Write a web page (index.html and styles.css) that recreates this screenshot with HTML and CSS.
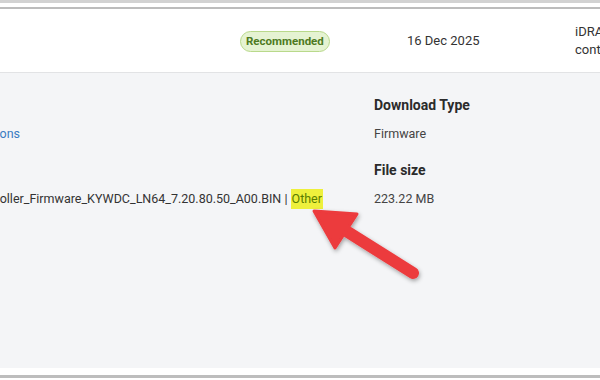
FILE: index.html
```html
<!DOCTYPE html>
<html lang="en">
    <head>
        <meta charset="UTF-8" />
        <meta name="viewport" content="width=device-width, initial-scale=1.0" />
        <title>Driver Details</title>
        <link rel="stylesheet" href="styles.css">
    </head>
    <body>
        <div class="frame">
            <div class="driverTable">
                <!-- Summary row -->
                <div class="driverRow">
                    <div class="cellBadge">
                        <span class="badge">Recommended</span>
                    </div>
                    <div class="cellDate">16 Dec 2025</div>
                    <div class="cellDesc">iDRAC with Lifecycle<br />controller</div>
                </div>

                <!-- Expanded details -->
                <div class="driverDetails">
                    <div class="detailsGrid">
                        <div></div>
                        <div class="detailKey">Download Type</div>
                        <div class="clipLine">
                            <a class="detailLink" href="#">Other versions</a>
                        </div>
                        <div class="detailValue">Firmware</div>
                        <div></div>
                        <div class="detailKey">File size</div>
                        <div class="clipLine wide">
                            <span class="fileName">iDRAC-with-Lifecycle-Controller_Firmware_KYWDC_LN64_7.20.80.50_A00.BIN | <mark class="fileTag">Other</mark></span>
                        </div>
                        <div class="detailValue">223.22 MB</div>
                    </div>
                </div>
                <div class="tableFoot"></div>
            </div>
        </div>

        <!-- Annotation arrow -->
        <svg class="annotation" width="600" height="380" viewBox="0 0 600 380">
            <defs>
                <filter id="arrowShadow" x="-20%" y="-20%" width="140%" height="140%">
                    <feDropShadow dx="1" dy="2" stdDeviation="2" flood-color="#000" flood-opacity="0.35" />
                </filter>
            </defs>
            <g filter="url(#arrowShadow)" fill="#ec3a3d" stroke="#ec3a3d">
                <line x1="343" y1="229" x2="413" y2="273" stroke-width="12" stroke-linecap="round" />
                <polygon points="314,211 357,214 335,248" stroke-width="3" stroke-linejoin="round" />
            </g>
        </svg>
    </body>
</html>
```

FILE: styles.css
```css
body {
    margin: 0;
    background: #ffffff;
    font-family: Roboto, 'Liberation Sans', sans-serif;
    color: #333333;
}

/* Outer frame */
.frame {
    border-top: 3px solid #d2d2d2;
    border-bottom: 3px solid #bdbdbd;
    padding-top: 4px;
    height: 368px;
    overflow: hidden;
}
.driverTable {
    border-top: 2px solid #bcbcbc;
}

/* Summary row */
.driverRow {
    display: flex;
    align-items: center;
    height: 63px;
    border-bottom: 1px solid #e2e3e5;
}
.driverRow > div {
    flex: none;
}
.cellBadge {
    width: 167px;
    padding-left: 240px;
}
.badge {
    display: inline-block;
    height: 19px;
    line-height: 19px;
    padding: 0 5px;
    border: 1px solid #b9d98b;
    border-radius: 11px;
    background: #e5f3d2;
    color: #4e7a22;
    font-size: 11.5px;
    font-weight: bold;
}
.cellDate {
    width: 168px;
    font-size: 13px;
    color: #333333;
}
.cellDesc {
    font-size: 13px;
    line-height: 18px;
    color: #333333;
    white-space: nowrap;
}

/* Expanded details */
.driverDetails {
    background: #f4f5f7;
    height: 273px;
    padding-top: 22px;
}
.detailsGrid {
    display: grid;
    grid-template-columns: 374px 1fr;
    grid-template-rows: 29px 36px 29px 20px;
    align-items: start;
    line-height: 20px;
}
.detailKey {
    font-size: 14px;
    font-weight: bold;
    color: #2b2b2b;
}
.detailValue {
    font-size: 12.5px;
    color: #444444;
}
.clipLine {
    display: flex;
    justify-content: flex-end;
    width: 20px;
    overflow: hidden;
    white-space: nowrap;
}
.clipLine.wide {
    width: 323px;
}
.detailLink {
    color: #3a7cc2;
    font-size: 12.5px;
    text-decoration: none;
}
.fileName {
    font-size: 12.5px;
    color: #333333;
}
.fileTag {
    background: #eef03c;
    color: #5b7d00;
    padding: 3px 1px;
}

.tableFoot {
    height: 9px;
    background: #ffffff;
}

/* Arrow overlay */
.annotation {
    position: absolute;
    left: 0;
    top: 0;
    pointer-events: none;
}
```
